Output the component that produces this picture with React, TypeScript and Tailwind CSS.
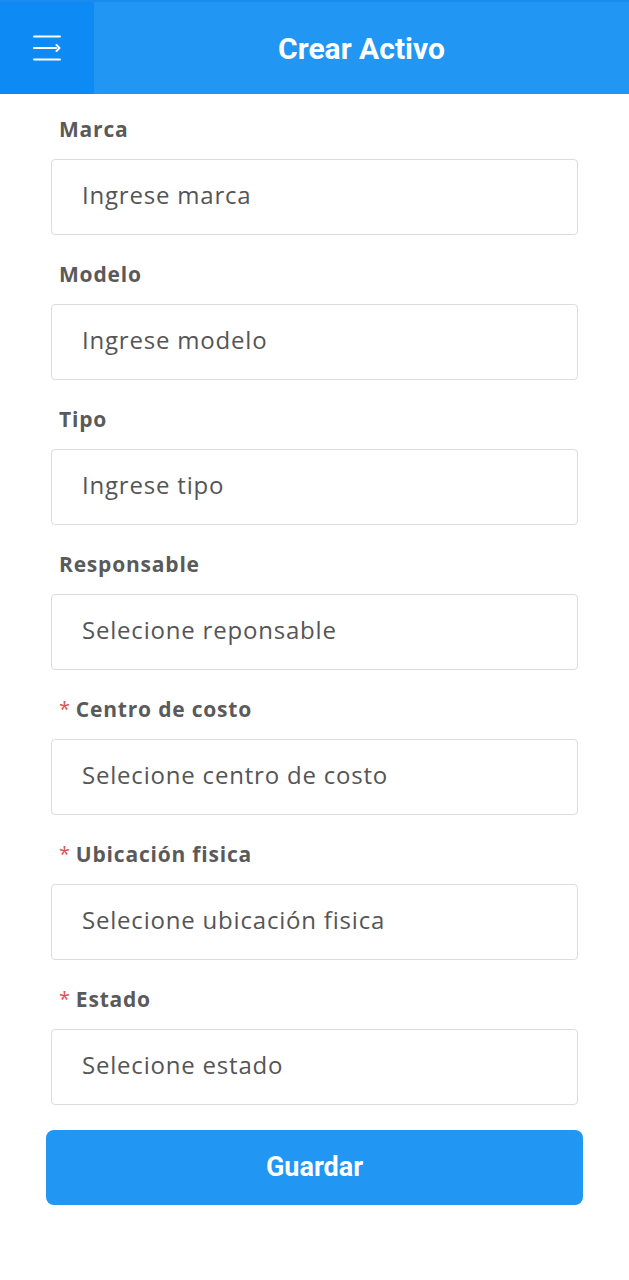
const fields = [
    { label: "Marca", placeholder: "Ingrese marca" },
    { label: "Modelo", placeholder: "Ingrese modelo" },
    { label: "Tipo", placeholder: "Ingrese tipo" },
    { label: "Responsable", placeholder: "Selecione reponsable" },
    { label: "Centro de costo", placeholder: "Selecione centro de costo", required: true },
    { label: "Ubicación fisica", placeholder: "Selecione ubicación fisica", required: true },
    { label: "Estado", placeholder: "Selecione estado", required: true },
];

const MenuIcon = () => (
    <svg width="30" height="26" viewBox="0 0 30 26" fill="none" stroke="white" strokeWidth="2" strokeLinecap="round">
        <line x1="2" y1="1.5" x2="28" y2="1.5" />
        <line x1="2" y1="13" x2="24" y2="13" />
        <polyline points="24.5,10 27.5,13 24.5,16" fill="none" strokeLinejoin="round" />
        <line x1="2" y1="24.5" x2="28" y2="24.5" />
    </svg>
);

const App = () => {
    return (
        <div className="w-[629px] min-h-[1280px] bg-white" style={{ fontFamily: "'Open Sans', 'Noto Sans', sans-serif" }}>
            <header className="flex h-[94px] bg-[#2196f3] border-t-2 border-[#1a8cf0]">
                <div className="w-[94px] flex items-center justify-center bg-[#0d8af3]">
                    <MenuIcon />
                </div>
                <h1
                    className="flex-1 flex items-center justify-center text-white text-[30px] font-bold"
                    style={{ fontFamily: "Roboto, sans-serif" }}
                >
                    Crear Activo
                </h1>
            </header>

            <form className="flex flex-col px-[51px] pt-[22px]">
                {fields.map((f) => (
                    <div key={f.label} className="flex flex-col mb-[26px]">
                        <label className="flex items-center gap-[5px] pl-[8px] h-[28px] text-[21px] font-bold tracking-[0.8px] text-[#5a5a5a]">
                            {f.required && <span className="text-[#d9534f] text-[20px] font-normal -mt-[2px]">*</span>}
                            {f.label}
                        </label>
                        <div className="mt-[15px] h-[76px] flex items-center pl-[30px] pb-[5px] border border-[#dcdcdc] rounded-[4px] text-[24px] tracking-[0.8px] text-[#555555]">
                            {f.placeholder}
                        </div>
                    </div>
                ))}
                <button
                    type="button"
                    className="-mx-[5px] -mt-[1px] h-[75px] rounded-[8px] bg-[#2196f3] text-white text-[27px] font-bold"
                    style={{ fontFamily: "Roboto, sans-serif" }}
                >
                    Guardar
                </button>
            </form>
        </div>
    );
};

export default App;
